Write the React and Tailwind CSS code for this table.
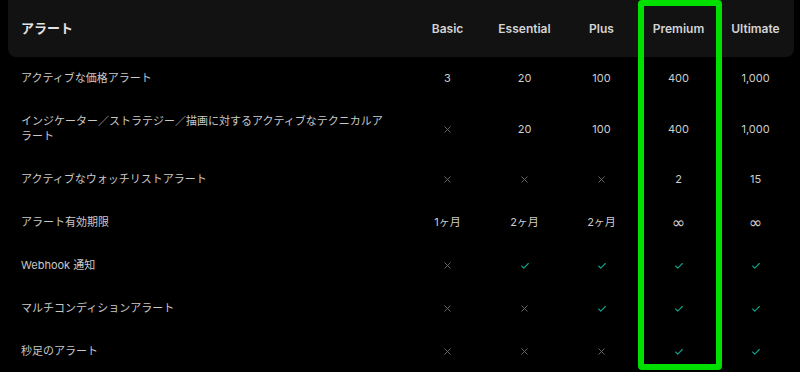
import { Check, X } from "lucide-react";

const plans = ["Basic", "Essential", "Plus", "Premium", "Ultimate"];

const Y = "yes";
const N = "no";

const rows = [
  { label: "アクティブな価格アラート", values: ["3", "20", "100", "400", "1,000"] },
  { label: "インジケーター／ストラテジー／描画に対するアクティブなテクニカルアラート", values: [N, "20", "100", "400", "1,000"] },
  { label: "アクティブなウォッチリストアラート", values: [N, N, N, "2", "15"] },
  { label: "アラート有効期限", values: ["1ヶ月", "2ヶ月", "2ヶ月", "∞", "∞"] },
  { label: "Webhook 通知", values: [N, Y, Y, Y, Y] },
  { label: "マルチコンディションアラート", values: [N, N, Y, Y, Y] },
  { label: "秒足のアラート", values: [N, N, N, Y, Y] },
];

function Cell({ value }) {
  if (value === Y) return <Check size={10} strokeWidth={2.6} className="text-[#12a38c]" />;
  if (value === N) return <X size={11} strokeWidth={2} className="text-[#6c6c6c]" />;
  if (value === "∞")
    return <span className="text-[16px] leading-[15px] font-['DejaVu_Sans',sans-serif]">∞</span>;
  return <span>{value}</span>;
}

export default function App() {
  return (
    <div
      className="relative w-[800px] h-[372px] overflow-hidden bg-black text-[#cdcdcd]"
      style={{ fontFamily: 'Inter, "Noto Sans CJK JP", sans-serif' }}
    >
      <div className="ml-[8px] w-[786px]">
        <div className="grid grid-cols-[401px_repeat(5,77px)] h-[57px] items-center bg-[#121212] rounded-b-[8px]">
          <div className="pl-[13px] text-[13px] font-bold text-[#e2e2e2]">アラート</div>
          {plans.map((p) => (
            <div key={p} className="text-center text-[12px] font-semibold text-[#d4d4d4]">
              {p}
            </div>
          ))}
        </div>
        {rows.map((r) => (
          <div key={r.label} className="grid grid-cols-[401px_repeat(5,77px)] items-center text-[11px] leading-[15px]">
            <div className="pl-[13px] pr-[20px] py-[14px] text-[#c9c9c9]">{r.label}</div>
            {r.values.map((v, i) => (
              <div key={i} className="flex justify-center items-center">
                <Cell value={v} />
              </div>
            ))}
          </div>
        ))}
      </div>
      <div className="absolute left-[638px] top-0 w-[84px] h-[370px] border-[6px] border-[#00e000] rounded-[4px]" />
    </div>
  );
}
